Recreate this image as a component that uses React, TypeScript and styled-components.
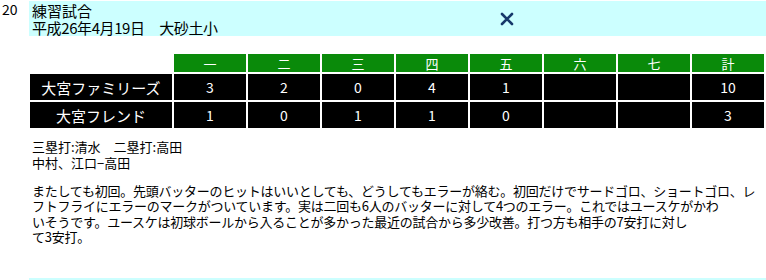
import styled, { createGlobalStyle } from "styled-components";

const GlobalStyle = createGlobalStyle`
  html, body {
    margin: 0;
    padding: 0;
    background: #ffffff;
    overflow: hidden;
  }
  body {
    font-family: "Noto Sans CJK JP", "Liberation Sans", sans-serif;
    color: #000000;
  }
`;

const Page = styled.div`
  width: 766px;
  height: 280px;
  overflow: hidden;
`;

const Entry = styled.section`
  display: flex;
  padding-top: 1px;
  padding-bottom: 32px;
`;

const Num = styled.div`
  width: 29px;
  flex-shrink: 0;
  box-sizing: border-box;
  padding: 0 0 0 2px;
  font-size: 14px;
  line-height: 17px;
`;

const Body = styled.div`
  flex: 1;
  min-width: 0;
`;

const Band = styled.header`
  display: grid;
  grid-template-columns: 217px 1fr;
  align-items: center;
  height: 35px;
  background: #ccffff;
`;

const BandText = styled.div`
  padding-left: 3px;
  font-size: 15px;
  line-height: 17px;
  white-space: nowrap;
`;

const DateLine = styled.span`
  letter-spacing: -0.4px;
`;

const CloseMark = styled.div`
  display: flex;
  justify-content: center;
  padding-left: 2px;
`;

const Score = styled.div`
  display: grid;
  grid-template-columns: 142px repeat(8, 72px);
  grid-template-rows: 18px 26px 26px;
  gap: 2px;
  margin: 18px 0 0 1px;
`;

const HeadCell = styled.div<{ $blank?: boolean }>`
  display: flex;
  align-items: center;
  justify-content: center;
  background: ${(p) => (p.$blank ? "transparent" : "#0a8a0a")};
  color: #ffffff;
  font-size: 13px;
`;

const Cell = styled.div<{ $team?: boolean }>`
  display: flex;
  align-items: center;
  justify-content: center;
  background: #000000;
  color: #ffffff;
  font-size: ${(p) => (p.$team ? "15px" : "14px")};
`;

const Notes = styled.div`
  margin-top: 11px;
  padding-left: 3px;
  font-size: 13px;
  line-height: 16px;
  white-space: pre;
`;

const Story = styled.p`
  margin: 12px 0 0;
  padding-left: 3px;
  font-size: 13px;
  line-height: 15.4px;
  letter-spacing: -0.25px;
  white-space: nowrap;
`;

const XIcon = () => (
  <svg width="14" height="14" viewBox="0 0 14 14">
    <path d="M2 2L12 12M12 2L2 12" stroke="#17396b" strokeWidth="2.6" strokeLinecap="round" />
  </svg>
);

const innings = ["一", "二", "三", "四", "五", "六", "七", "計"];

const teams = [
  { name: "大宮ファミリーズ", runs: ["3", "2", "0", "4", "1", "", "", "10"] },
  { name: "大宮フレンド", runs: ["1", "0", "1", "1", "0", "", "", "3"] },
];

const story = [
  "またしても初回。先頭バッターのヒットはいいとしても、どうしてもエラーが絡む。初回だけでサードゴロ、ショートゴロ、レ",
  "フトフライにエラーのマークがついています。実は二回も6人のバッターに対して4つのエラー。これではユースケがかわ",
  "いそうです。ユースケは初球ボールから入ることが多かった最近の試合から多少改善。打つ方も相手の7安打に対し",
  "て3安打。",
];

export default function App() {
  return (
    <Page>
      <GlobalStyle />
      <Entry>
        <Num>20</Num>
        <Body>
          <Band>
            <BandText>
              練習試合
              <br />
              <DateLine>平成26年4月19日　大砂土小</DateLine>
            </BandText>
            <CloseMark>
              <XIcon />
            </CloseMark>
          </Band>

          <Score>
            <HeadCell $blank />
            {innings.map((inn) => (
              <HeadCell key={inn}>{inn}</HeadCell>
            ))}
            {teams.map((t) => [
              <Cell key={t.name} $team>
                {t.name}
              </Cell>,
              ...t.runs.map((r, i) => <Cell key={t.name + i}>{r}</Cell>),
            ])}
          </Score>

          <Notes>{"三塁打:清水　二塁打:高田\n中村、江口−高田"}</Notes>

          <Story>
            {story.map((line, i) => (
              <span key={i}>
                {line}
                {i < story.length - 1 && <br />}
              </span>
            ))}
          </Story>
        </Body>
      </Entry>
      <Entry>
        <Num />
        <Body>
          <Band />
        </Body>
      </Entry>
    </Page>
  );
}
